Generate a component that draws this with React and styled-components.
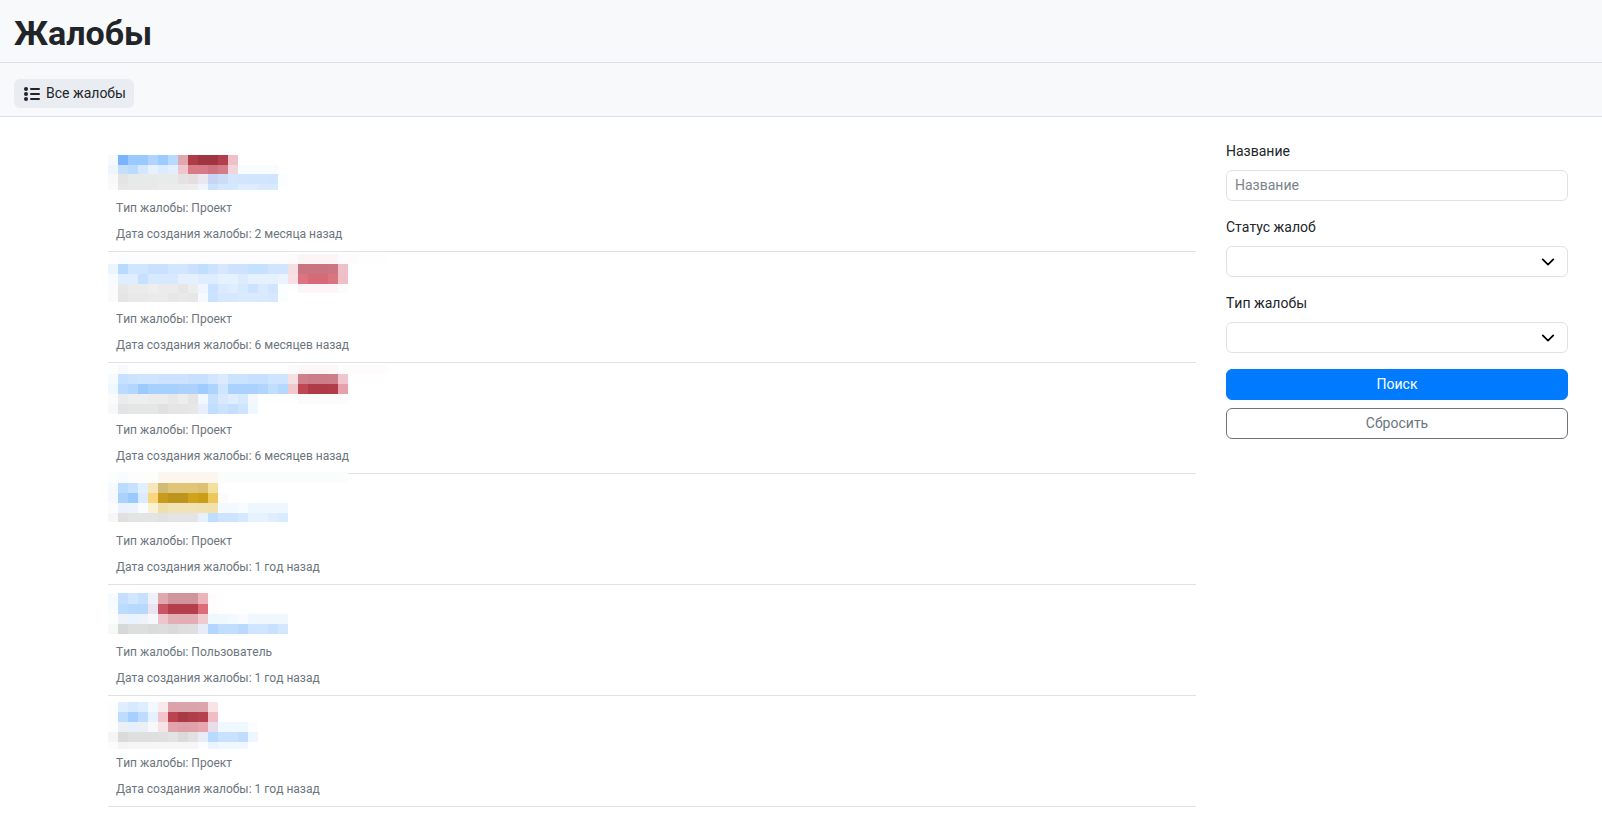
import React from "react";
import styled, { createGlobalStyle } from "styled-components";

const GlobalStyle = createGlobalStyle`
  *, *::before, *::after { box-sizing: border-box; }
  body {
    margin: 0;
    background: #ffffff;
    color: #212529;
    font-family: Roboto, "Liberation Sans", sans-serif;
    font-size: 14px;
    line-height: 21px;
    font-kerning: none;
  }
`;

const Header = styled.header`
  background: #f8f9fb;
  border-bottom: 1px solid #dee2e6;
  padding: 12px 14px 8px;
`;

const Title = styled.h1`
  margin: 0;
  font-size: 34px;
  font-weight: 700;
  line-height: 42px;
`;

const Nav = styled.nav`
  display: flex;
  background: #f8f9fb;
  border-bottom: 1px solid #dcdfe5;
  padding: 16px 14px 8px;
`;

const NavLink = styled.a`
  display: flex;
  align-items: center;
  gap: 4px;
  padding: 4px 8px;
  border-radius: 6px;
  background: #e9ecf1;
  color: #212529;
  text-decoration: none;

  svg { display: block; }
`;

const Content = styled.main`
  display: grid;
  grid-template-columns: minmax(0, 1fr) 342px;
  align-items: start;
  gap: 30px;
  padding: 24px 34px 15px 108px;
`;

const List = styled.ul`
  margin: 0;
  padding: 0;
  list-style: none;
`;

const Item = styled.li`
  padding-bottom: 4px;
  border-bottom: 1px solid #dee2e6;
`;

const Mosaic = styled.svg`
  display: block;
  height: 54px;
  width: 300px;
  overflow: visible;
`;

const Meta = styled.p`
  margin: 0;
  padding: 0 8px;
  font-size: 12px;
  line-height: 26px;
  color: #6c757d;
`;

const Filters = styled.form`
  display: flex;
  flex-direction: column;
  gap: 16px;
`;

const Field = styled.div`
  display: flex;
  flex-direction: column;
  gap: 8px;
`;

const controlStyle = `
  width: 100%;
  height: 31px;
  border: 1px solid #dee2e6;
  border-radius: 6px;
  background: #ffffff;
  color: #212529;
  font: inherit;
  font-kerning: none;
`;

const Input = styled.input`
  ${controlStyle}
  padding: 3px 8px 5px;

  &::placeholder { color: #7b838b; opacity: 1; }
`;

const SelectBox = styled.div`
  display: grid;
  align-items: center;

  > * { grid-area: 1 / 1; }
  > svg { justify-self: end; margin-right: 13px; pointer-events: none; }
`;

const Select = styled.select`
  ${controlStyle}
  appearance: none;
  padding: 4px 36px 4px 8px;
`;

const Actions = styled.div`
  display: flex;
  flex-direction: column;
  gap: 8px;
`;

const Button = styled.button`
  height: 31px;
  padding: 4px 8px;
  border: 1px solid ${(p) => (p.$primary ? "#007bff" : "#6c757d")};
  border-radius: 6px;
  background: ${(p) => (p.$primary ? "#007bff" : "#ffffff")};
  color: ${(p) => (p.$primary ? "#ffffff" : "#6c757d")};
  font: inherit;
  font-kerning: none;
  cursor: pointer;
`;

const CELL = 10;

/* Each band is [top, height, runs]; a run is "colour" or "colour*cells". */
const complaints = [
  {
    type: "Проект",
    date: "2 месяца назад",
    bands: [
      [14, 10, "#f6faff #79b5ff #99c9ff*2 #b0d4ff #9dcbff #b8d8ff #e0a7ae #ad3c47 #9f3540*2 #b13f4c #edc1c7"],
      [24, 9, "#edf6ff #c5dffb #badaff #d5e7ff #e7f0ff #dcebff #e3efff #efc6cc #d97b87*2 #cf7380 #d67c89 #f1d5da #f8fcff*4"],
      [33, 10, "#f9f9f9 #e4e4e4 #e8e9e9*3 #e9eaea*2 #e4e2e2 #e5dedf #eae7f1 #c6d5f4 #cbdcf8 #d4e6fb #d2e5ff*3 #cfe4ff #fcfdff"],
      [43, 6, "#fafbfa #e7e7e7 #e9e9e9*3 #ececec*3 #eeeded #eef5ff #cce3ff #d5e8ff*2 #deedff*2 #d9eaff*2 #fdfeff"],
    ],
  },
  {
    type: "Проект",
    date: "6 месяцев назад",
    bands: [
      [2, 10, "#fdfefd #fafcff #fdfdff*16 #fcfafb #fbf5f6*4 #fdfbfc*2 #fefefe*3"],
      [12, 10, "#eaf5ff #b8daff #d0e5ff*2 #c9e1ff*2 #d3e6ff*2 #c9e1ff #c2deff #cce2ff #d6e7ff #cce2ff*2 #c6e0ff*2 #d2e5ff*2 #f5dfe3 #c9747f*3 #cb7783 #efc0c8"],
      [22, 10, "#f7fbff #deedff*2 #c6e0ff #d7e9ff*3 #e5f0ff*2 #deedff*2 #e6f1ff*2 #deebff #e6f1ff*3 #eaf3ff #f7e1e4 #dd7380 #d66a77*2 #d97481 #f0bec6"],
      [32, 9, "#fafbfa #e6e7e8 #eaebeb*2 #eeeeee #ebebeb*2 #e7e5e5 #ededed #f0f5ff #cae2ff #dceaff #e0edff #d7e9ff #cce3ff #d9eaff #d1e5ff #fbfdff #fefefe #fcf6f8 #fdf5f7*3 #fefbfc"],
      [41, 9, "#fafbfa #e5e5e5 #e9e9e9*2 #ebebeb*2 #e7e7e7 #e9e9e9 #e7e7e7 #f6f9ff #cbe3ff #d5e8ff*2 #d9eaff*3 #d5e8ff #fbfdff"],
    ],
  },
  {
    type: "Проект",
    date: "6 месяцев назад",
    bands: [
      [2, 9, "#fefefe #f7faff #fefdff*16 #fdfafb #fdf7f8*4 #fefcfd*5"],
      [11, 10, "#f6fbff #c6e0ff #cbe3ff #cfe5ff*2 #cce2ff*3 #c7e0ff*2 #d2e6ff #dceaff #cce3ff*2 #c7e0ff*2 #cfe5ff*2 #f5e0e3 #ce818a #cc7d88*2 #ca7f8b #f1c5cd"],
      [21, 10, "#eff7ff #bbdaff #b2d6ff #9bcaff #a5d0ff*3 #abd2ff*2 #9fccff #add4ff #ceE4ff #abd2ff*3 #b0d5ff #c2deff #b5d8ff #f0c9cf #c04652 #ae3b47*2 #b13d4a #e7a1ab"],
      [31, 10, "#fafbfa #eaebec #eeeeee*2 #ececec*2 #e8e8e8 #ededed #e6e5e5 #f1f6ff #c6e0ff #d7e8ff #e0edff #d7e9ff #f3f8ff #fdfefe*4 #fafcfb*3 #fbfbfb #fdfcfc"],
      [41, 10, "#f7f8f7 #e3e4e5 #e5e6e6*3 #e0e1e1 #e5e5e5*2 #e7e7e7 #e8eefb #c2deff #cce3ff #c5dfff #cfe5ff #eff7ff"],
    ],
  },
  {
    type: "Проект",
    date: "1 год назад",
    bands: [
      [-2, 11, "#fcfdfc #f8fbff #fbfdff #fdfdfc*2 #fcf7ee*6 #fbfdfd*12 #fbfdfd"],
      [9, 10, "#f5faff #bbdbff #c7e1ff #e0f0ff #f7e6b7 #d1bc77 #dfc575*3 #dcc172 #f4df9f"],
      [19, 10, "#f4f9ff #abd2ff #99c9ff #dcebff #f9d67c #c89b1b #bd951c*2 #d0a31b #c99d17 #ecc75c #fdfbfa"],
      [29, 10, "#fcfcfd #eaf2ff #edf3fb #f8fcff #faf0d2 #f0dfac #f2e3b6*3 #f1e2b1 #f3e1ad #f4f9ff*2 #f8fbff #eef6ff*4"],
      [39, 9, "#f7f7f7 #e0e0e0 #e3e4e4*3 #e0e1e1 #e4e4e4*2 #e5e4e4 #e6f1fd #bfddff #cde4ff*2 #d5e8ff #e6f2ff*2 #dfeeff #d9ebff"],
    ],
  },
  {
    type: "Пользователь",
    date: "1 год назад",
    bands: [
      [8, 11, "#f6fbff #c5dfff #d0e7ff #c7e0ff #eef0fa #dea8ae #cf949c*3 #ecb3bb #fefcfd"],
      [19, 10, "#f8fcff #bbdbff #b7d9ff*2 #eae4f0 #cb5663 #b33f4c*3 #dd6c79 #fefcfd"],
      [29, 10, "#fcfefe #edf2fb #e9f2ff #edf2fb #f7f8fc #edc6cd #e3aeb5 #e2adb4*2 #efcbd0 #eff7ff*2 #f4f8ff #f9fbff #eff7ff*4"],
      [39, 10, "#f7f9f7 #d5d9da #dddfdf*2 #dadcdc #dddddd #d9dadb #dedede #e0dfdf #e6edf8 #b2d6ff #c2deff*2 #bad9ff #d0e5ff*2 #c7e1ff #d3e7ff"],
    ],
  },
  {
    type: "Проект",
    date: "1 год назад",
    bands: [
      [6, 10, "#fbfdff #deeeff #d7e9ff #deedff #f2f8ff #f8e9eb #dba2aa #d9a5ad*2 #dba5ad #f8e3e6"],
      [16, 10, "#fbfdff #bddcff #a5d0ff #bddcff #e6f1ff #f1c5cb #bb424f #a83a47 #ad3e4a #b5414f #f0bdc4"],
      [26, 10, "#fcfdfe #ebf0f5 #e5f0fc #eaf0f5 #f7f8fc #f6e3e6 #e3a3ad #dfa0a9 #e0a1aa #e7a6b0 #e7deea #eff7ff*3 #fcfdff"],
      [36, 10, "#f5f5f5 #dadada #dfdfdf*3 #e0e0e0 #e2e3e4 #dcdad9 #e2e0e0 #e6edf8 #b9daff #c7e1ff*2 #c0ddff #eef6ff"],
      [46, 7, "#fcfcfc #f4f4f4 #f6f6f6*7 #fbfcfe #e9f4ff #eff7ff*3 #fdfeff"],
    ],
  },
];

function cellsOf([top, height, runs]) {
  let column = 0;
  return runs.split(" ").map((run) => {
    const [fill, count = "1"] = run.split("*");
    const cell = { x: column * CELL, y: top, width: Number(count) * CELL, height, fill };
    column += Number(count);
    return cell;
  });
}

function HiddenSummary({ bands }) {
  return (
    <Mosaic aria-hidden="true" shapeRendering="crispEdges">
      {bands.flatMap(cellsOf).map((cell) => (
        <rect key={`${cell.x}-${cell.y}`} {...cell} />
      ))}
    </Mosaic>
  );
}

function ListIcon() {
  return (
    <svg width="20" height="16" viewBox="0 0 20 16" fill="none" stroke="currentColor" strokeWidth="2" strokeLinecap="round" aria-hidden="true">
      <path d="M9 3h8M9 8h8M9 13h8" />
      <g fill="currentColor" stroke="none">
        <circle cx="4" cy="3" r="2" />
        <circle cx="4" cy="8" r="2" />
        <circle cx="4" cy="13" r="2" />
      </g>
    </svg>
  );
}

function SelectField({ id, label }) {
  return (
    <Field>
      <label htmlFor={id}>{label}</label>
      <SelectBox>
        <Select id={id} defaultValue="">
          <option value="" />
        </Select>
        <svg width="14" height="14" viewBox="0 0 16 16" fill="none" stroke="#000000" strokeWidth="2" strokeLinecap="round" strokeLinejoin="round" aria-hidden="true">
          <path d="m2 5 6 6 6-6" />
        </svg>
      </SelectBox>
    </Field>
  );
}

export default function App() {
  return (
    <>
      <GlobalStyle />
      <Header>
        <Title>Жалобы</Title>
      </Header>
      <Nav>
        <NavLink href="#all">
          <ListIcon />
          Все жалобы
        </NavLink>
      </Nav>
      <Content>
        <List>
          {complaints.map((complaint, index) => (
            <Item key={index}>
              <HiddenSummary bands={complaint.bands} />
              <Meta>Тип жалобы: {complaint.type}</Meta>
              <Meta>Дата создания жалобы: {complaint.date}</Meta>
            </Item>
          ))}
        </List>
        <Filters onSubmit={(event) => event.preventDefault()}>
          <Field>
            <label htmlFor="name">Название</label>
            <Input id="name" type="text" placeholder="Название" />
          </Field>
          <SelectField id="status" label="Статус жалоб" />
          <SelectField id="type" label="Тип жалобы" />
          <Actions>
            <Button type="submit" $primary>Поиск</Button>
            <Button type="reset">Сбросить</Button>
          </Actions>
        </Filters>
      </Content>
    </>
  );
}
